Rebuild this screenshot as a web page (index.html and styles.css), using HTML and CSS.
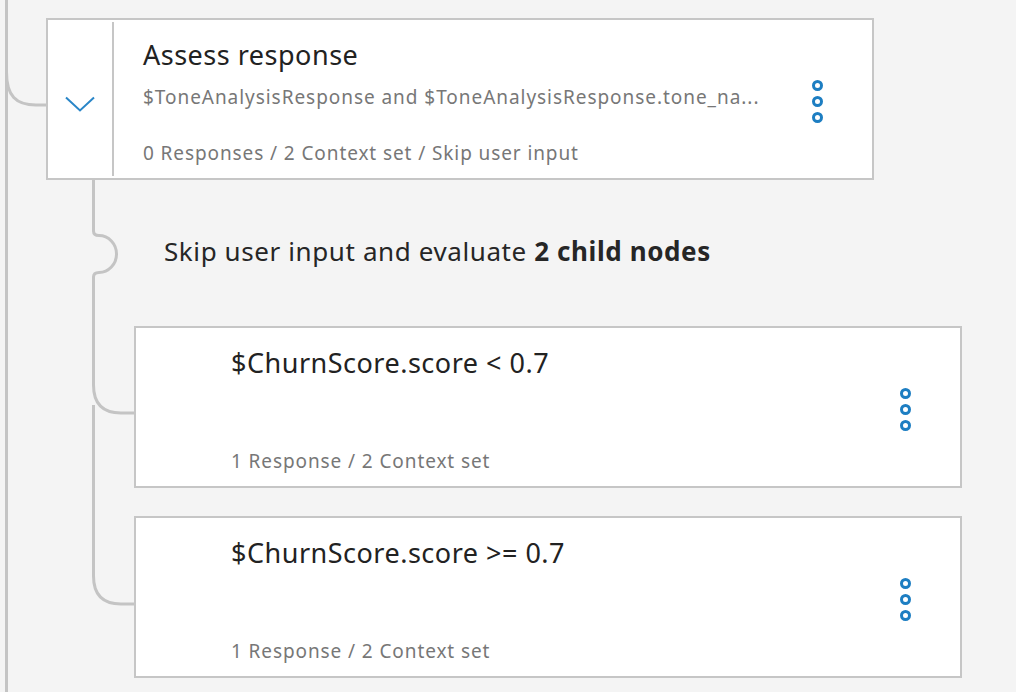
FILE: index.html
```html
<!DOCTYPE html>
<html lang="en">
<head>
<meta charset="utf-8">
<title>Dialog tree</title>
<link rel="stylesheet" href="styles.css">
</head>
<body>
<div class="canvas">
  <svg class="wires" width="1016" height="692" viewBox="0 0 1016 692" aria-hidden="true">
    <path d="M6.5 0 V692" />
    <path d="M6.5 72 C6.5 96 16 105 36 105 H48" />
    <path d="M93.5 180 V231 Q93.5 235.5 99 235.5 A17.5 18.5 0 0 1 99 272.5 Q93.5 272.5 93.5 277 V385 Q93.5 413 121 413 H136 M93.5 405 V576 Q93.5 604 121 604 H136" />
  </svg>

  <div class="tree">
    <div class="node node--parent">
      <div class="toggle">
        <svg width="30" height="16" viewBox="0 0 30 16"><path d="M1 1.5 L15 14.5 L29 1.5" /></svg>
      </div>
      <div class="node-body">
        <div class="node-title">Assess response</div>
        <div class="node-cond">$ToneAnalysisResponse and $ToneAnalysisResponse.tone_na...</div>
        <div class="node-meta">0 Responses / 2 Context set / Skip user input</div>
      </div>
      <div class="menu"><span class="dot"></span><span class="dot"></span><span class="dot"></span></div>
    </div>

    <div class="children">
      <div class="skip-label">Skip user input and evaluate <b>2 child nodes</b></div>

      <div class="node node--child">
        <div class="node-body">
          <div class="node-title">$ChurnScore.score &lt; 0.7</div>
          <div class="node-meta">1 Response / 2 Context set</div>
        </div>
        <div class="menu"><span class="dot"></span><span class="dot"></span><span class="dot"></span></div>
      </div>

      <div class="node node--child">
        <div class="node-body">
          <div class="node-title">$ChurnScore.score &gt;= 0.7</div>
          <div class="node-meta">1 Response / 2 Context set</div>
        </div>
        <div class="menu"><span class="dot"></span><span class="dot"></span><span class="dot"></span></div>
      </div>
    </div>
  </div>
</div>
</body>
</html>
```

FILE: styles.css
```css
* { box-sizing: border-box; }

html, body {
  margin: 0;
  padding: 0;
  background: #f4f4f4;
}

body {
  width: 1016px;
  height: 692px;
  overflow: hidden;
  font-family: "Noto Sans", "Open Sans", sans-serif;
  color: #222222;
}

.canvas {
  position: relative;
  width: 1016px;
  height: 692px;
}

.wires {
  position: absolute;
  left: 0;
  top: 0;
  z-index: 0;
}

.wires path {
  fill: none;
  stroke: #c4c4c4;
  stroke-width: 3;
}

.tree {
  position: relative;
  z-index: 1;
  padding: 18px 0 0 46px;
}

.node {
  display: flex;
  width: 828px;
  height: 162px;
  background: #ffffff;
  border: 2px solid #c6c6c6;
}

.toggle {
  width: 66px;
  margin: 2px 0;
  border-right: 2px solid #c6c6c6;
  display: flex;
  align-items: center;
  justify-content: center;
  padding-top: 10px;
}

.toggle path {
  fill: none;
  stroke: #2a86c8;
  stroke-width: 2;
}

.node-body {
  flex: 1;
  display: flex;
  flex-direction: column;
  padding: 20px 0 13px 29px;
  min-width: 0;
}

.node--child .node-body {
  padding-left: 95px;
}

.node-title {
  font-size: 27px;
  line-height: 30px;
  letter-spacing: 0.5px;
  color: #222222;
}

.node-cond {
  margin-top: 15px;
  font-size: 19px;
  line-height: 24px;
  letter-spacing: 0.95px;
  color: #777777;
  white-space: nowrap;
}

.node-meta {
  margin-top: auto;
  font-size: 19px;
  line-height: 24px;
  letter-spacing: 0.9px;
  color: #777777;
}

.menu {
  width: 110px;
  display: flex;
  flex-direction: column;
  align-items: center;
  justify-content: center;
  gap: 5px;
  padding-top: 4px;
}

.dot {
  width: 11px;
  height: 11px;
  border-radius: 50%;
  border: 3px solid #1d7ec2;
}

.children {
  margin-left: 88px;
}

.skip-label {
  margin-top: 55px;
  margin-bottom: 59px;
  padding-left: 30px;
  font-size: 26px;
  line-height: 32px;
  letter-spacing: 0.6px;
  color: #262626;
}

.skip-label b {
  font-weight: 700;
}

.node--child + .node--child {
  margin-top: 28px;
}
```
